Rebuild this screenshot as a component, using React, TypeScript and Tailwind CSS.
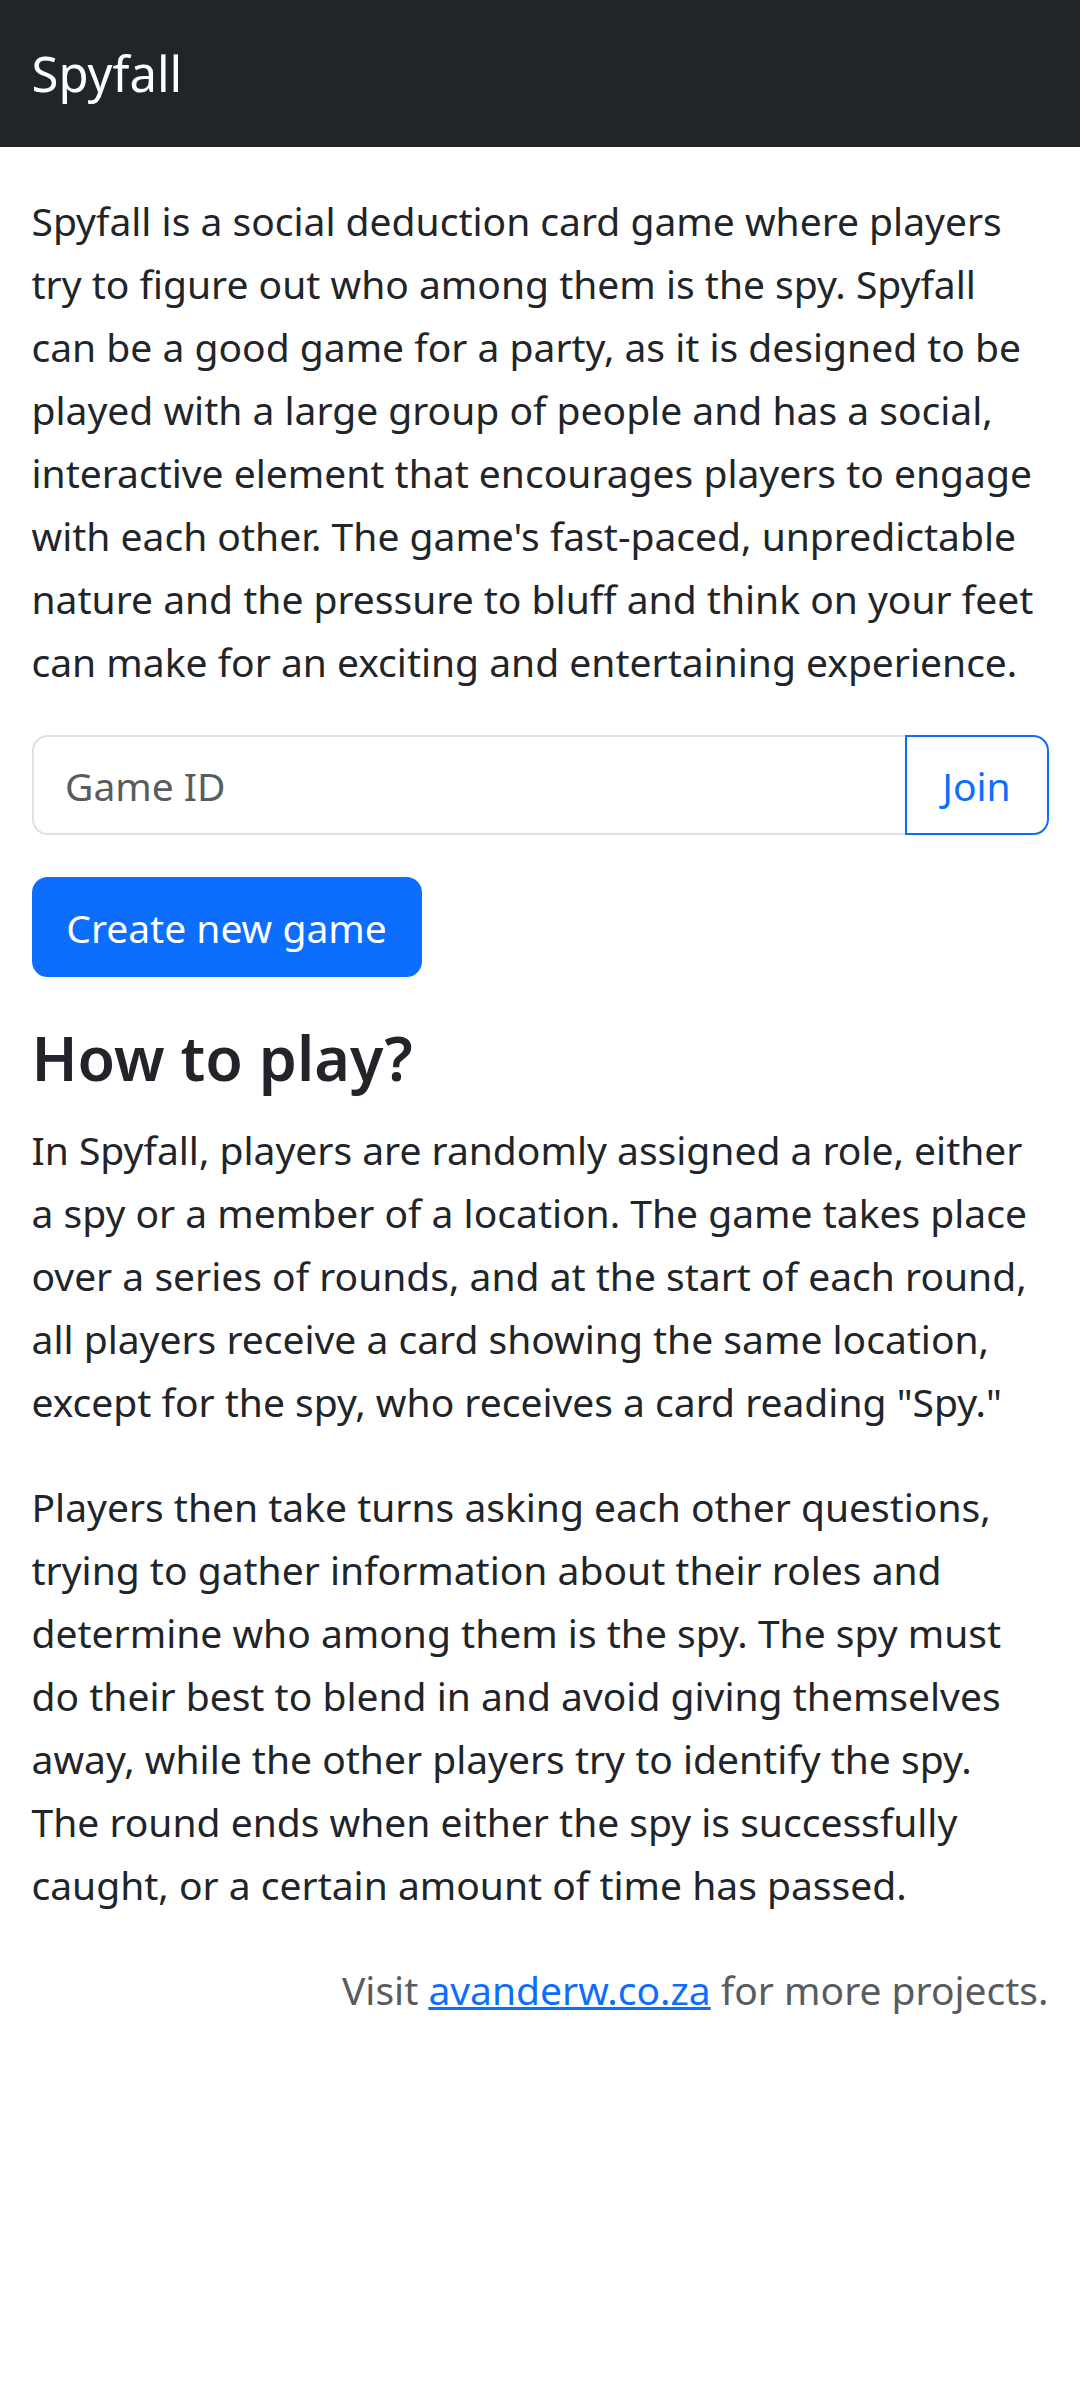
const font = { fontFamily: '"Noto Sans", "Open Sans", sans-serif' }

const intro = [
  "Spyfall is a social deduction card game where players",
  "try to figure out who among them is the spy. Spyfall",
  "can be a good game for a party, as it is designed to be",
  "played with a large group of people and has a social,",
  "interactive element that encourages players to engage",
  "with each other. The game's fast-paced, unpredictable",
  "nature and the pressure to bluff and think on your feet",
  "can make for an exciting and entertaining experience.",
]

const howTo1 = [
  "In Spyfall, players are randomly assigned a role, either",
  "a spy or a member of a location. The game takes place",
  "over a series of rounds, and at the start of each round,",
  "all players receive a card showing the same location,",
  "except for the spy, who receives a card reading \"Spy.\"",
]

const howTo2 = [
  "Players then take turns asking each other questions,",
  "trying to gather information about their roles and",
  "determine who among them is the spy. The spy must",
  "do their best to blend in and avoid giving themselves",
  "away, while the other players try to identify the spy.",
  "The round ends when either the spy is successfully",
  "caught, or a certain amount of time has passed.",
]

const Lines = ({ lines }: { lines: string[] }) => (
  <p className="mb-[42px] whitespace-nowrap">
    {lines.map((l, i) => (
      <span key={i} className="block">{l}</span>
    ))}
  </p>
)

export default function App() {
  return (
    <div className="w-[1080px] min-h-[2400px] bg-white text-[#212529] text-[39px] leading-[63px]" style={font}>
      <nav className="h-[147px] bg-[#212529] flex items-center px-[31.5px]">
        <span className="text-white text-[49px] leading-[78.75px]">Spyfall</span>
      </nav>
      <main className="px-[31.5px] pt-[42px]">
        <Lines lines={intro} />
        <div className="flex h-[100px] mb-[42px]">
          <input
            className="flex-1 min-w-0 border-[2.6px] border-[#dee2e6] rounded-l-[15.75px] px-[31.5px] text-[39px] placeholder:text-[#595c5f] outline-none"
            placeholder="Game ID"
            style={font}
          />
          <button className="-ml-[2.6px] w-[144px] flex items-center justify-center border-[2.6px] border-[#0d6efd] text-[#0d6efd] rounded-r-[15.75px] text-[39px]">
            Join
          </button>
        </div>
        <button className="h-[100px] w-[390px] bg-[#0d6efd] text-white rounded-[15.75px] text-[39px] mb-[42px]">
          Create new game
        </button>
        <h2 className="text-[61px] leading-[78px] font-semibold mb-[21px]">How to play?</h2>
        <Lines lines={howTo1} />
        <Lines lines={howTo2} />
        <p className="text-right text-[#595c5f]">
          Visit <a href="#" className="text-[#0d6efd] underline">avanderw.co.za</a> for more projects.
        </p>
      </main>
    </div>
  )
}
